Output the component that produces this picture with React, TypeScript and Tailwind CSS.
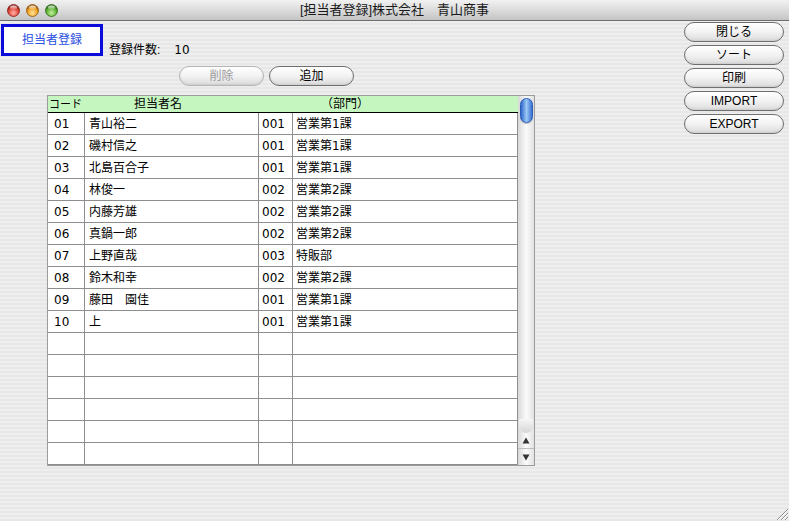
import React from "react";

const rows: string[][] = [
  ["01", "青山裕二", "001", "営業第1課"],
  ["02", "磯村信之", "001", "営業第1課"],
  ["03", "北島百合子", "001", "営業第1課"],
  ["04", "林俊一", "002", "営業第2課"],
  ["05", "内藤芳雄", "002", "営業第2課"],
  ["06", "真鍋一郎", "002", "営業第2課"],
  ["07", "上野直哉", "003", "特販部"],
  ["08", "鈴木和幸", "002", "営業第2課"],
  ["09", "藤田　園佳", "001", "営業第1課"],
  ["10", "上", "001", "営業第1課"],
  ["", "", "", ""],
  ["", "", "", ""],
  ["", "", "", ""],
  ["", "", "", ""],
  ["", "", "", ""],
  ["", "", "", ""],
];

function Light({ id, c1, c2, c3 }: { id: string; c1: string; c2: string; c3: string }) {
  return (
    <svg width="13" height="13" viewBox="0 0 13 13">
      <defs>
        <radialGradient id={id} cx="50%" cy="70%" r="60%">
          <stop offset="0%" stopColor={c1} />
          <stop offset="70%" stopColor={c2} />
          <stop offset="100%" stopColor={c3} />
        </radialGradient>
        <linearGradient id={id + "h"} x1="0" y1="0" x2="0" y2="1">
          <stop offset="0%" stopColor="#ffffff" stopOpacity="0.9" />
          <stop offset="100%" stopColor="#ffffff" stopOpacity="0" />
        </linearGradient>
      </defs>
      <circle cx="6.5" cy="6.5" r="6" fill={`url(#${id})`} stroke={c3} strokeWidth="0.8" />
      <ellipse cx="6.5" cy="3.6" rx="3.6" ry="2.2" fill={`url(#${id}h)`} />
    </svg>
  );
}

function AquaButton({ label, disabled, className }: { label: string; disabled?: boolean; className: string }) {
  return (
    <div
      className={`flex h-[20px] items-center justify-center rounded-full border bg-linear-to-b from-[#ffffff] via-[#f2f2f2] to-[#dcdcdc] text-[12px] shadow-[inset_0_-1px_2px_rgba(0,0,0,0.08)] ${
        disabled ? "border-[#b5b5b5] text-[#9a9a9a]" : "border-[#6f6f6f] text-black"
      } ${className}`}
    >
      {label}
    </div>
  );
}

export default function App() {
  return (
    <div className="flex h-[521px] w-[789px] flex-col overflow-hidden bg-[#ececec] font-['DejaVu_Sans','Noto_Sans_CJK_JP',sans-serif] text-black">
      {/* title bar */}
      <div className="flex h-[21px] shrink-0 items-center border-b border-[#6e6e6e] bg-linear-to-b from-[#f2f2f2] via-[#dcdcdc] to-[#c4c4c4]">
        <div className="flex w-[60px] items-center gap-[6px] pl-[7px]">
          <Light id="r" c1="#ffb3a8" c2="#e0453a" c3="#8a1b14" />
          <Light id="y" c1="#ffe6a0" c2="#f0a020" c3="#94560a" />
          <Light id="g" c1="#c8f0a0" c2="#5cb232" c3="#2d6a14" />
        </div>
        <div className="flex-1 pr-[60px] text-center font-['Liberation_Sans','Noto_Sans_CJK_JP',sans-serif] text-[13px] text-[#1a1a1a]">
          [担当者登録]株式会社　青山商事
        </div>
      </div>

      {/* body */}
      <div className="relative flex flex-1 bg-[repeating-linear-gradient(180deg,#eeeeee_0px,#eeeeee_2px,#e7e7e7_2px,#e7e7e7_4px)]">
        <div className="flex flex-1 flex-col">
          <div className="flex items-end pt-[3px] pl-[1px]">
            <div className="flex h-[32px] w-[102px] items-center justify-center border-[3px] border-[#0a0adc] bg-white font-['Liberation_Sans','Noto_Sans_CJK_JP',sans-serif] text-[12px] text-[#2a4ee0]">
              担当者登録
            </div>
            <div className="mb-[-3px] ml-[6px] flex font-['Liberation_Sans','Noto_Sans_CJK_JP',sans-serif] text-[12px]">
              <span>登録件数:</span>
              <span className="ml-[14px] font-['DejaVu_Sans',sans-serif]">10</span>
            </div>
          </div>

          <div className="mt-[10px] flex gap-[5px] pl-[179px]">
            <AquaButton label="削除" disabled className="w-[85px]" />
            <AquaButton label="追加" className="w-[85px]" />
          </div>

          {/* table */}
          <div className="mt-[9px] ml-[47px] flex h-[371px] w-[488px] border border-[#9c9c9c] bg-white">
            <div className="flex w-[471px] flex-col">
              <div className="flex h-[17px] items-center border-b border-black bg-[#c6f6c0] font-['Liberation_Sans','Noto_Sans_CJK_JP',sans-serif] text-[11px]">
                <div className="w-[86px] pl-[1px]">コード</div>
                <div className="w-[187px] text-[12px]">担当者名</div>
                <div className="text-[12px]">（部門）</div>
              </div>
              {rows.map((r, i) => (
                <div key={i} className="flex h-[22px] border-b border-[#8e8e8e] text-[12px]">
                  <div className="flex w-[37px] items-center border-r border-[#8e8e8e] pl-[6px]">{r[0]}</div>
                  <div className="flex w-[174px] items-center border-r border-[#8e8e8e] pl-[4px]">{r[1]}</div>
                  <div className="flex w-[34px] items-center border-r border-[#8e8e8e] pl-[3px]">{r[2]}</div>
                  <div className="flex flex-1 items-center border-r border-[#8e8e8e] pl-[3px]">{r[3]}</div>
                </div>
              ))}
            </div>
            {/* scrollbar */}
            <div className="flex w-[16px] flex-col bg-linear-to-r from-[#d8d8d8] via-[#fbfbfb] to-[#e2e2e2]">
              <div className="mx-[1.5px] mt-[2px] h-[25px] rounded-full border border-[#2a5cb8] bg-linear-to-r from-[#2f66c8] via-[#9cc8f4] to-[#3a70d0] shadow-[0_1px_1px_rgba(0,0,0,0.25)]" />
              <div className="flex-1" />
              <div className="mx-[1px] h-[14px] rounded-b-full bg-linear-to-b from-[#f6f6f6] to-[#d6d6d6]" />
              <div className="flex h-[16px] items-center justify-center border-b border-[#bdbdbd]">
                <svg width="8" height="7" viewBox="0 0 8 7"><path d="M4 0.5 L7.5 6.5 L0.5 6.5 Z" fill="#333" /></svg>
              </div>
              <div className="flex h-[16px] items-center justify-center">
                <svg width="8" height="7" viewBox="0 0 8 7"><path d="M0.5 0.5 L7.5 0.5 L4 6.5 Z" fill="#333" /></svg>
              </div>
            </div>
          </div>
        </div>

        {/* right buttons */}
        <div className="flex w-[105px] flex-col gap-[3px] pt-[1px] font-['Liberation_Sans','Noto_Sans_CJK_JP',sans-serif]">
          <AquaButton label="閉じる" className="w-[100px]" />
          <AquaButton label="ソート" className="w-[100px]" />
          <AquaButton label="印刷" className="w-[100px]" />
          <AquaButton label="IMPORT" className="w-[100px]" />
          <AquaButton label="EXPORT" className="w-[100px]" />
        </div>

        {/* resize grip */}
        <svg className="absolute bottom-0 right-0" width="15" height="15" viewBox="0 0 15 15">
          <path d="M14 3 L3 14 M14 7 L7 14 M14 11 L11 14" stroke="#8a8a8a" strokeWidth="1" />
          <path d="M14 4 L4 14 M14 8 L8 14 M14 12 L12 14" stroke="#ffffff" strokeWidth="1" />
        </svg>
      </div>
    </div>
  );
}
